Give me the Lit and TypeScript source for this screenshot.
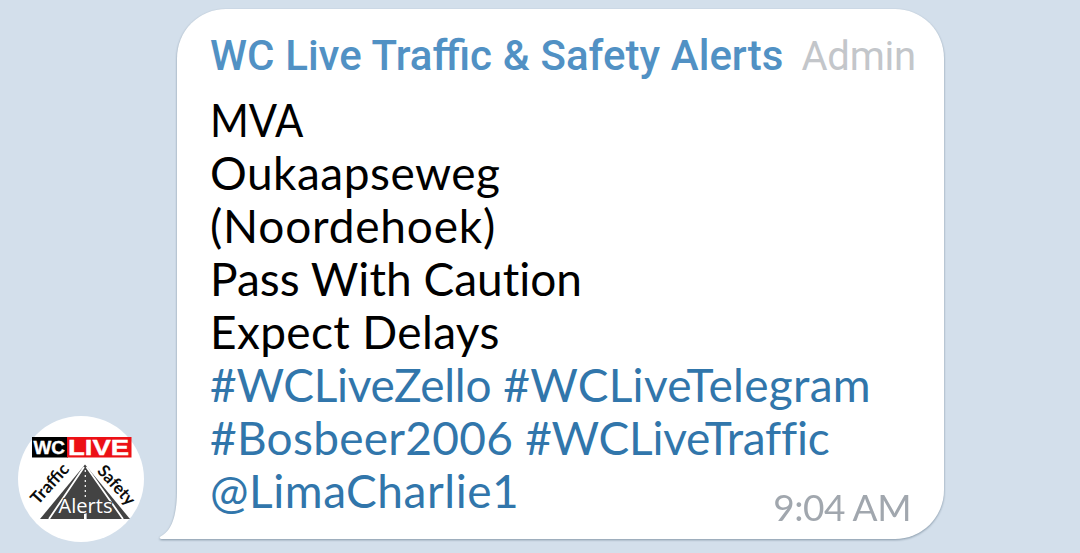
import { LitElement, html, svg, css } from 'lit';
import { customElement, property } from 'lit/decorators.js';

type Word = { text: string; track: number; narrow?: boolean };

// track = letter spacing in px
const LINES: { link: boolean; words: Word[] }[] = [
  { link: false, words: [{ text: 'MVA', track: 0, narrow: true }] },
  { link: false, words: [{ text: 'Oukaapseweg', track: 0.5 }] },
  { link: false, words: [{ text: '(Noordehoek)', track: 0.8 }] },
  { link: false, words: [{ text: 'Pass With Caution', track: 0.02 }] },
  { link: false, words: [{ text: 'Expect Delays', track: 0.36 }] },
  { link: true, words: [{ text: '#WCLiveZello', track: -0.3 }, { text: '#WCLiveTelegram', track: 0.3 }] },
  { link: true, words: [{ text: '#Bosbeer2006', track: 0.27 }, { text: '#WCLiveTraffic', track: -0.23 }] },
  { link: true, words: [{ text: '@LimaCharlie1', track: 0.55 }] },
];

@customElement('channel-avatar')
export class ChannelAvatar extends LitElement {
  static styles = css`
    :host {
      display: block;
      width: 126px;
      height: 126px;
    }
    svg {
      display: block;
    }
    .badge {
      font-family: 'Liberation Sans', Arial, sans-serif;
      font-weight: 700;
      fill: #fff;
      stroke: #fff;
      stroke-width: 0.4px;
    }
    .side {
      font-family: Lato, sans-serif;
      font-weight: 700;
      font-size: 17px;
      fill: #0b0b0b;
    }
    .road-text {
      font-family: 'Open Sans', sans-serif;
      font-weight: 500;
      font-size: 20px;
      fill: #fff;
      stroke: #434343;
      stroke-width: 2px;
      paint-order: stroke;
    }
  `;

  render() {
    return html`
      <svg width="126" height="126" viewBox="0 0 126 126">
        ${svg`
          <circle cx="63" cy="63" r="63" fill="#fff" />
          <rect x="14" y="21" width="36" height="20.5" fill="#000" />
          <rect x="49" y="21" width="64.5" height="20.5" fill="#ec1015" />
          <text class="badge" x="15.5" y="38" font-size="18" textLength="31.5" lengthAdjust="spacingAndGlyphs">WC</text>
          <text class="badge" x="50" y="39" font-size="22.5" textLength="61" lengthAdjust="spacingAndGlyphs">LIVE</text>
          <path d="M67 48.5 L112 103 H22 Z" fill="#434343" />
          <path d="M66 51 L31 103 M68.5 51 L105 103" stroke="#fff" stroke-width="1.8" />
          <path d="M67.3 54 V84" stroke="#fff" stroke-width="1.2" stroke-dasharray="2 3" />
          <path d="M67.3 97 V103" stroke="#fff" stroke-width="2.6" />
          <text class="road-text" x="40.5" y="97" textLength="54" lengthAdjust="spacingAndGlyphs">Alerts</text>
          <text class="side" transform="translate(20 89.5) rotate(-48)" textLength="48" lengthAdjust="spacingAndGlyphs">Traffic</text>
          <text class="side" transform="translate(78.5 55.5) rotate(48)" textLength="47" lengthAdjust="spacingAndGlyphs">Safety</text>
        `}
      </svg>
    `;
  }
}

@customElement('message-bubble')
export class MessageBubble extends LitElement {
  @property() sender = '';
  @property() role = '';
  @property() time = '';

  static styles = css`
    :host {
      display: block;
      position: relative;
      box-sizing: border-box;
      width: 767px;
      height: 530px;
      padding: 22px 28px 0 33px;
      background: #fff;
      border-radius: 49px 49px 49px 0;
      filter: drop-shadow(0 1px 1px #8496a6);
    }
    .tail {
      position: absolute;
      left: -18px;
      bottom: 0;
    }
    header {
      display: flex;
      justify-content: space-between;
      align-items: baseline;
      height: 62px;
      line-height: 50px;
      font-family: Roboto, sans-serif;
      white-space: nowrap;
    }
    .sender {
      font-size: 42px;
      font-weight: 500;
      word-spacing: 0.4px;
      color: #5191c4;
    }
    .role {
      font-size: 40px;
      font-weight: 400;
      letter-spacing: -0.2px;
      color: #c3c6ca;
    }
    .line {
      display: flex;
      gap: 12px;
      height: 53px;
      line-height: 53px;
      font-family: Lato, sans-serif;
      font-size: 46px;
      font-variant-ligatures: none;
      color: #000;
      white-space: pre;
    }
    .link {
      color: #3176ab;
    }
    .narrow {
      transform: scaleX(0.91);
      transform-origin: left;
    }
    .time {
      position: absolute;
      right: 33px;
      bottom: 10px;
      line-height: 44px;
      font-family: Lato, sans-serif;
      font-size: 37px;
      letter-spacing: -0.5px;
      color: #a1a7ae;
    }
  `;

  render() {
    return html`
      <svg class="tail" width="20" height="50" viewBox="0 0 20 50">
        <path d="M20 0 H18 C18 24 14 41 1.5 47.5 C0 48.5 0.5 50 2.5 50 H20 Z" fill="#fff" />
      </svg>
      <header>
        <span class="sender">${this.sender}</span>
        <span class="role">${this.role}</span>
      </header>
      ${LINES.map(
        (line) => html`
          <div class="line ${line.link ? 'link' : ''}">${line.words.map(
            (w) => html`<span class="${w.narrow ? 'narrow' : ''}" style="letter-spacing:${w.track}px">${w.text}</span>`
          )}</div>
        `
      )}
      <span class="time">${this.time}</span>
    `;
  }
}

@customElement('app-root')
export class AppRoot extends LitElement {
  static styles = css`
    :host {
      display: flex;
      align-items: flex-end;
      gap: 33px;
      box-sizing: border-box;
      width: 1080px;
      height: 553px;
      padding: 0 0 11px 18px;
      background: #d3dfeb;
      overflow: hidden;
    }
    message-bubble {
      margin-bottom: 3px;
    }
  `;

  render() {
    return html`
      <channel-avatar></channel-avatar>
      <message-bubble
        sender="WC Live Traffic &amp; Safety Alerts"
        role="Admin"
        time="9:04 AM"
      ></message-bubble>
    `;
  }
}
